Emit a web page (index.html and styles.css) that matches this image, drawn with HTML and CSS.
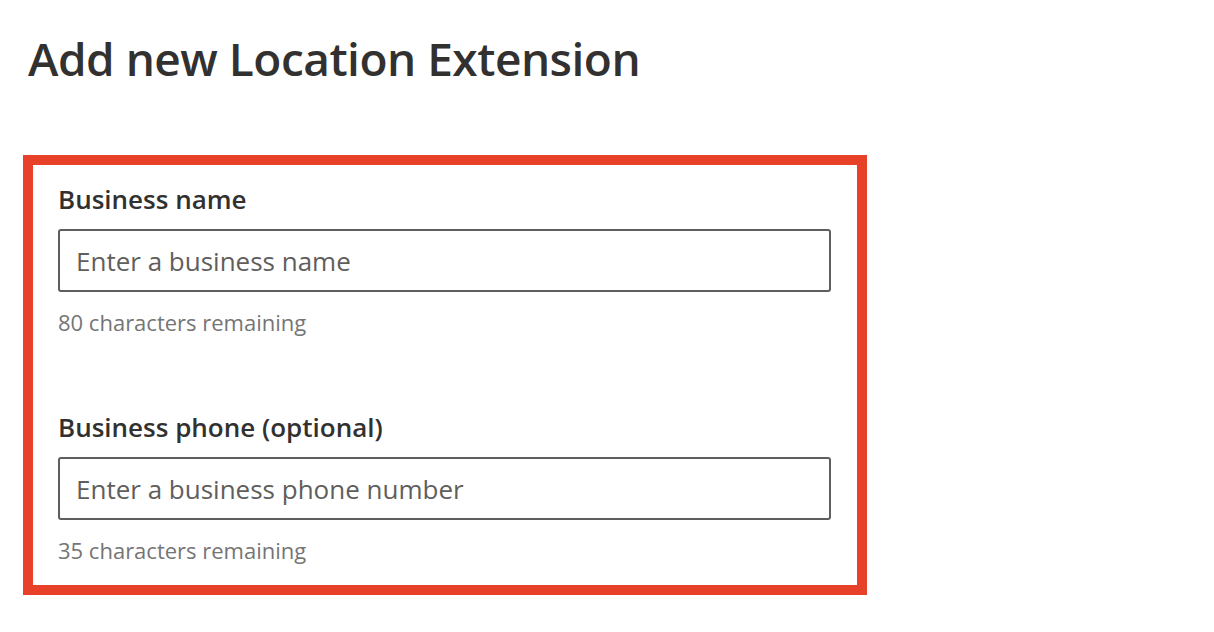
FILE: index.html
```html
<!DOCTYPE html>
<html>
<head>
<meta charset="utf-8">
<link rel="stylesheet" href="styles.css">
</head>
<body>
<h1 class="title">Add new Location Extension</h1>
<section class="panel">
  <div class="field">
    <label class="label" for="bn">Business name</label>
    <div class="input" id="bn"><span class="placeholder">Enter a business name</span></div>
    <div class="hint">80 characters remaining</div>
  </div>
  <div class="field">
    <label class="label" for="bp">Business phone (optional)</label>
    <div class="input" id="bp"><span class="placeholder">Enter a business phone number</span></div>
    <div class="hint">35 characters remaining</div>
  </div>
</section>
</body>
</html>
```
FILE: styles.css
```css
html, body {
  margin: 0;
  padding: 0;
  background: #ffffff;
}
body {
  font-family: "Open Sans", "Noto Sans", sans-serif;
  color: #323130;
}
.title {
  margin: 0;
  padding: 28px 0 0 28px;
  font-size: 46px;
  line-height: 60px;
  font-weight: 600;
  color: #323130;
  letter-spacing: -0.5px;
}
.panel {
  margin: 67px 0 0 23px;
  width: 844px;
  border: 10px solid #e8412a;
  padding: 18px 0 21px 25px;
  box-sizing: border-box;
  display: flex;
  flex-direction: column;
  gap: 75px;
}
.field {
  display: flex;
  flex-direction: column;
}
.label {
  font-size: 26px;
  line-height: 32px;
  font-weight: 600;
  color: #323130;
}
.input {
  margin-top: 14px;
  width: 773px;
  height: 63px;
  box-sizing: border-box;
  border: 2px solid #605e5c;
  border-radius: 3px;
  display: flex;
  align-items: center;
  padding-left: 16px;
}
.placeholder {
  font-size: 26px;
  color: #605e5c;
}
.hint {
  margin-top: 16px;
  font-size: 22px;
  line-height: 28px;
  color: #757575;
}
```
